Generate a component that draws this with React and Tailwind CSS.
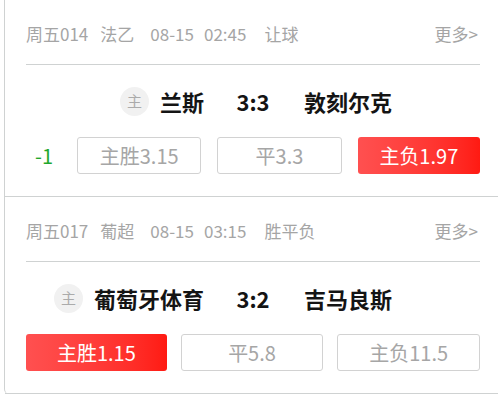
import React from "react";

const matches = [
  {
    no: "周五014",
    league: "法乙",
    date: "08-15",
    time: "02:45",
    type: "让球",
    home: "兰斯",
    score: "3:3",
    away: "敦刻尔克",
    handicap: "-1",
    odds: [
      { label: "主胜3.15" },
      { label: "平3.3" },
      { label: "主负1.97", hit: true },
    ],
  },
  {
    no: "周五017",
    league: "葡超",
    date: "08-15",
    time: "03:15",
    type: "胜平负",
    home: "葡萄牙体育",
    score: "3:2",
    away: "吉马良斯",
    odds: [
      { label: "主胜1.15", hit: true },
      { label: "平5.8" },
      { label: "主负11.5" },
    ],
  },
];

function OddsButton({ label, hit }) {
  if (hit) {
    return (
      <div className="flex-1 h-[37px] rounded-[3px] bg-gradient-to-r from-[#ff5050] to-[#ff1a12] text-white text-[20px] flex items-center justify-center">
        {label}
      </div>
    );
  }
  return (
    <div className="flex-1 h-[37px] rounded-[3px] border border-[#d2d2d2] bg-white text-[#a6a6a6] text-[20px] flex items-center justify-center">
      {label}
    </div>
  );
}

function MatchCard({ m }) {
  return (
    <div className="border-b border-[#cfd2d2] pl-[21px]">
      <div className="w-[454px]">
        {/* header */}
        <div className="h-[65px] pt-[4px] flex items-center text-[17px] text-[#a5a5a5] border-b border-[#cfd2d2]">
          <span>{m.no}</span>
          <span className="ml-[12px]">{m.league}</span>
          <span className="ml-[16px]">{m.date}</span>
          <span className="ml-[10px]">{m.time}</span>
          <span className="ml-[18px]">{m.type}</span>
          <span className="ml-auto mr-[2px]">更多&gt;</span>
        </div>

        {/* teams */}
        <div className="h-[72px] grid grid-cols-[1fr_98px_1fr] items-center text-[22px] font-bold text-[#141414]">
          <div className="flex items-center justify-end gap-[11px]">
            <span className="w-[29px] h-[29px] rounded-full bg-[#f1f1f1] text-[#ababab] text-[15px] font-normal flex items-center justify-center">
              主
            </span>
            <span>{m.home}</span>
          </div>
          <div className="text-center">{m.score}</div>
          <div className="pl-[2px]">{m.away}</div>
        </div>

        {/* odds */}
        <div className={`flex items-center pb-[22px] ${m.handicap ? "gap-[16px]" : "gap-[14px]"}`}>
          {m.handicap && (
            <div className="w-[35px] pl-[9px] -mr-[16px] text-[20px] text-[#1fa82c]">{m.handicap}</div>
          )}
          {m.handicap && <div className="w-[0px]" />}
          {m.odds.map((o, i) => (
            <OddsButton key={i} {...o} />
          ))}
        </div>
      </div>
    </div>
  );
}

export default function App() {
  return (
    <div
      className="w-[498px] h-[402px] overflow-hidden bg-white"
      style={{ fontFamily: '"Noto Sans CJK SC", "Noto Sans", sans-serif' }}
    >
      <div className="ml-[4px] w-[540px] border-l border-[#cfd2d2] rounded-bl-[5px]">
        {matches.map((m) => (
          <MatchCard key={m.no} m={m} />
        ))}
      </div>
    </div>
  );
}
